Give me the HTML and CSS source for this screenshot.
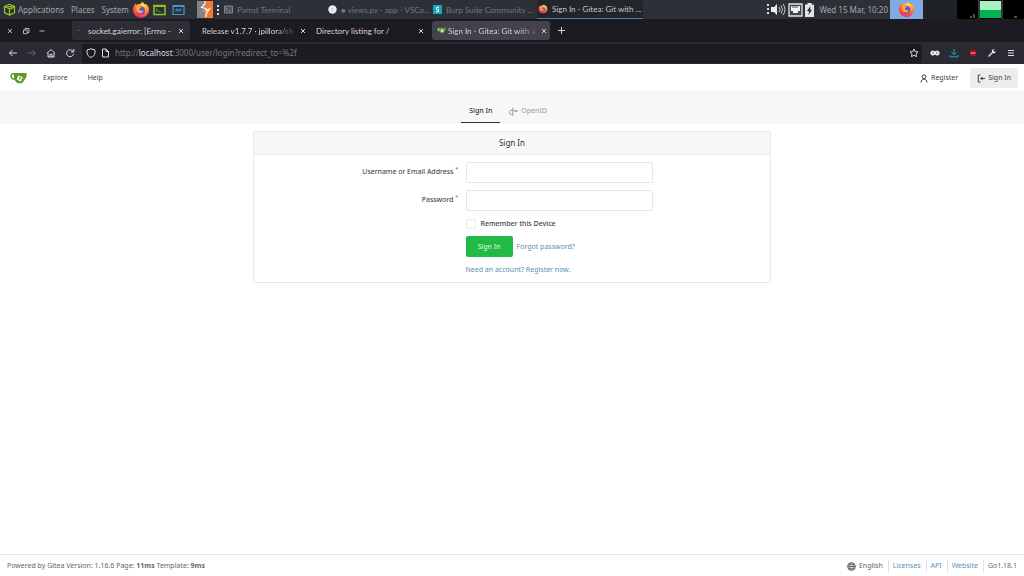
FILE: index.html
```html
<!DOCTYPE html>
<html lang="en">
<head>
<meta charset="utf-8">
<title>Sign In - Gitea: Git with a cup of tea</title>
<link rel="stylesheet" href="styles.css">
</head>
<body>
<svg class="defs" width="0" height="0" aria-hidden="true">
  <defs>
    <radialGradient id="flame" cx=".65" cy=".2" r=".95"><stop offset="0" stop-color="#ffe23e"/><stop offset=".4" stop-color="#ff9a2c"/><stop offset=".75" stop-color="#fb3c4d"/><stop offset="1" stop-color="#d9207c"/></radialGradient>
    <symbol id="firefox" viewBox="0 0 18 18"><path fill="url(#flame)" d="M2.4 4.2c.3-.9.8-1.500 1.300-2 0 .8.3 1.200.7 1.500 1-.5 2-.6 3-.4C8.700 2.800 9.600 1.600 11 .6c0 1.500 1 2 2.300 3.200 0-.6 0-.9-.2-1.500 2.600 1.700 4.100 4.200 4 7.200A8.200 8.200 0 0 1 .8 9.600C.7 7.600 1.300 5.600 2.400 4.200z"/><circle cx="9" cy="9.400" r="4" fill="#7545e0"/><path d="M4.500 6c2-1 4-.5 5 .8-1.200 0-2 .5-2.300 1.500.5 1.700 2.800 2 4.300.9-.4 2.600-2.400 3.400-4.300 2.800C5.200 11.400 4 9 4.500 6z" fill="#ffae2e"/></symbol>
    <symbol id="cup" viewBox="0 0 16 11"><path d="M4 .8h11.700c.2 2.200-.3 4.200-1.400 5.700l-2.200 3c-.5.7-1 1-1.800 1H7.500C6.500 10.500 5.300 9 4.600 7.600 2 7.500.4 5.800.3 3.600.2 1.600 1.600.6 4 .8z" fill="#609926"/><path d="M3.600 2.200c-1.400-.1-1.900.6-1.800 1.700.1 1.100.9 1.900 2.300 2.200-.3-1.200-.5-2.500-.5-3.900z" fill="#fff"/><rect x="6.800" y="3.600" width="4.600" height="4.600" rx="1" transform="rotate(25 9 6)" fill="#fff"/><path d="M9.700 3.500 8.300 7.800M9.200 5l1.300.7-.5 1.600" stroke="#609926" stroke-width=".7" fill="none"/></symbol>
    <symbol id="close" viewBox="0 0 8 8"><path d="M2 2l4 4M6 2 2 6" stroke="currentColor" fill="none"/></symbol>
  </defs>
</svg>

<header class="panel">
  <nav class="menus">
    <button class="menu"><svg width="13" height="13" viewBox="0 0 13 13" fill="none" stroke="#94d11c" stroke-width="1.200"><path d="M1.500 3.500 6.500 1.300l5 2.200v6.200L6.500 12 1.500 9.700zM1.500 3.500l5 2 5-2M6.500 5.500V12M4 2.400l5 2v2"/></svg>Applications</button>
    <button class="menu">Places</button>
    <button class="menu">System</button>
  </nav>
  <div class="launchers">
    <svg width="18" height="18"><use href="#firefox"/></svg>
    <svg width="13" height="12" viewBox="0 0 13 12"><path d="M1 1.500h11v9H1z" fill="none" stroke="#8bc321" stroke-width="1.500"/><path d="M1 2h11" stroke="#8bc321" stroke-width="2"/><path d="m3 5 1.500 1L3 7.300M5.500 7.500h2" fill="none" stroke="#8bc321" stroke-width=".8"/></svg>
    <svg width="13" height="12" viewBox="0 0 13 12"><path d="M1 1.500h11v9H1z" fill="none" stroke="#4a8fd3" stroke-width="1.200"/><path d="M1 2h11" stroke="#4a8fd3" stroke-width="2"/><path d="M4 8V5h1.500v1.500H4M7 8V5h2v1.500H7" fill="none" stroke="#4a8fd3" stroke-width=".8"/></svg>
    <svg class="burp" width="16" height="17" viewBox="0 0 16 17"><path fill="#82828a" d="M0 0h16v17H0z"/><path fill="#f47a2d" d="M8 0h8v17H7l2-5-4-2 4-4z"/><path d="M8 0v3L4.500 6.500 9 7.500v2l3.500-1.500L9 13v3" fill="none" stroke="#fff" stroke-width="1.200"/></svg>
  </div>
  <nav class="windows">
    <button class="window dim w-term"><svg width="3" height="12" viewBox="0 0 3 12" fill="#ddd"><path d="M0 1h2v2H0zM0 5h2v2H0zM0 9h2v2H0z"/></svg><svg width="9" height="9" viewBox="0 0 9 9"><path d="M.5 1h8v7h-8z" fill="#51545a" stroke="#85888d"/><path d="m2 3 1.500 1.500L2 6M4.500 6H6" stroke="#aaa" fill="none" stroke-width=".7"/></svg><span>Parrot Terminal</span></button>
    <button class="window dim w-code"><svg width="9" height="9" viewBox="0 0 9 9"><circle cx="4.500" cy="4.500" r="4.200" fill="#e7edf1"/><path d="m3 3 3 3M5.500 2.500 3 6" stroke="#b9cddc" stroke-width=".8"/></svg><span>● views.py - app - VSCo...</span></button>
    <button class="window dim w-burp"><svg width="9" height="9" viewBox="0 0 9 9"><path fill="#15a9b5" d="M0 0h9v9H0z"/><path d="M6 2.300H3.500v2h2v2.400H3" stroke="#fff" fill="none"/></svg><span>Burp Suite Community ...</span></button>
    <button class="window current"><svg width="10" height="10"><use href="#firefox"/></svg><span>Sign In - Gitea: Git with ...</span></button>
  </nav>
  <div class="tray">
    <svg width="20" height="15" viewBox="0 0 20 15"><path d="M1 2h2v2H1zM1 6h2v2H1zM1 10h2v2H1z" fill="#ddd"/><path d="M5 5h3l3-3v11L8 10H5z" fill="#eee"/><path d="M13 5q2 2.500 0 5M15 3.500q3 4 0 8M17 2q4 5.500 0 11" fill="none" stroke="#ccc"/></svg>
    <svg width="15" height="14" viewBox="0 0 15 14"><path d="M1 1h13v12H1z" fill="#43474c" stroke="#e4e4e4" stroke-width="1.300"/><path d="M3 3h9v5h-2v2H5V8H3z" fill="#f3f3f3"/><path d="M5 3v2M7 3v2M9 3v2" stroke="#444"/></svg>
    <svg width="9" height="14" viewBox="0 0 9 14"><path d="M2.500 0h4v1.500H9V14H0V1.500h2.500z" fill="#e4e4e4"/><path d="M5.500 3 2 8h2L3.500 12 7 6.800H5z" fill="#25282d"/></svg>
    <time>Wed 15 Mar, 10:20</time>
  </div>
  <div class="active-app"><svg width="17" height="17"><use href="#firefox"/></svg></div>
  <svg class="monitors" width="67" height="19" viewBox="0 0 67 19"><path fill="#000" d="M0 0h67v19H0z"/><path fill="#343940" d="M21 0h2v19h-2zM44 0h2v19h-2z"/><path fill="#a8f3c5" d="M23 1h21v9H23z"/><path fill="#00b454" d="M23 10h21v8H23z"/><path d="M17 14v4M13 17h2M57 17h3" stroke="#b8a43d"/></svg>
</header>

<section class="tabbar">
  <div class="win-controls">
    <button aria-label="Close window"><svg width="8" height="8"><use href="#close"/></svg></button>
    <button aria-label="Restore"><svg width="8" height="8" viewBox="0 0 8 8" fill="none" stroke="currentColor"><path d="M1.500 3h3.700v3.700H1.500zM3 3V1.500h4v4H5"/></svg></button>
    <button aria-label="Minimize"><svg width="8" height="8" viewBox="0 0 8 8" stroke="currentColor"><path d="M1.500 4h5"/></svg></button>
  </div>
  <div class="tab shaded"><i class="dot"></i><span>socket.gaierror: [Errno -</span><button aria-label="Close tab"><svg width="8" height="8"><use href="#close"/></svg></button></div>
  <div class="tab"><i class="gap"></i><span class="fade">Release v1.7.7 · jpillora/ch</span><button aria-label="Close tab"><svg width="8" height="8"><use href="#close"/></svg></button></div>
  <div class="tab bare"><span>Directory listing for /</span><button aria-label="Close tab"><svg width="8" height="8"><use href="#close"/></svg></button></div>
  <div class="tab selected"><svg width="9" height="7" class="favicon"><use href="#cup"/></svg><span class="fade">Sign In - Gitea: Git with a</span><button aria-label="Close tab"><svg width="8" height="8"><use href="#close"/></svg></button></div>
  <button class="new-tab" aria-label="New tab"><svg width="9" height="9" viewBox="0 0 9 9" stroke="currentColor"><path d="M4.500 1v7M1 4.500h7"/></svg></button>
</section>

<section class="toolbar">
  <div class="nav-buttons">
    <button aria-label="Back"><svg width="10" height="10" viewBox="0 0 10 10"><path d="M9 5H1.500M4.500 2l-3 3 3 3"/></svg></button>
    <button aria-label="Forward" disabled><svg width="10" height="10" viewBox="0 0 10 10"><path d="M1 5h7.500M5.500 2l3 3-3 3"/></svg></button>
    <button aria-label="Home"><svg width="10" height="10" viewBox="0 0 10 10"><path d="M1 5.200 5 1.500l4 3.700M2 5v4h6V5M4 9V6.300h2V9"/></svg></button>
    <button aria-label="Reload"><svg width="10" height="10" viewBox="0 0 10 10"><path d="M8 3.300A3.500 3.500 0 1 0 8.500 6M8.800 1v3H5.800"/></svg></button>
  </div>
  <div class="urlbar">
    <svg width="10" height="10" viewBox="0 0 10 10"><path d="M5 .8 9 2v2.500C9 7 7.300 8.600 5 9.400 2.700 8.600 1 7 1 4.500V2z"/></svg>
    <svg width="9" height="10" viewBox="0 0 9 10"><path d="M1.500 1H5l2.500 2.500V9h-6zM5 1v2.500h2.500"/></svg>
    <p class="url">http://<b>localhost</b>:3000/user/login?redirect_to=%2f</p>
    <svg width="10" height="10" viewBox="0 0 10 10"><path d="m5 1 1.200 2.600 2.800.3L7 5.800l.5 2.900L5 7.300 2.500 8.700 3 5.800 1 3.900l2.800-.3z"/></svg>
  </div>
  <div class="tools">
    <svg width="10" height="10" viewBox="0 0 10 10"><path d="M.7 5C.7 2.500 3 2.500 5 3.500c2-1 4.300-1 4.300 1.500S7 7.800 5 6.200C3 7.800.7 7.500.7 5z" fill="#fff" stroke-width=".6"/><path d="M2.300 5h1.500M6.200 5h1.500" stroke="#222"/></svg>
    <svg width="10" height="10" viewBox="0 0 10 10"><path d="M5 1v5.500M2.500 4.300 5 6.700l2.500-2.400M1 7v1.800h8V7" stroke="#12aebd"/></svg>
    <svg width="10" height="10" viewBox="0 0 10 10"><circle cx="5" cy="5" r="3.500" fill="#a10d18" stroke="none"/><path d="M3 4.500h1.500v1.200H3zM5.500 4.500H7v1.200H5.500z" stroke="#e9b2b5" stroke-width=".6"/></svg>
    <svg width="10" height="10" viewBox="0 0 10 10"><path d="m1.500 8.500 4-4" stroke-width="1.500"/><path d="M7.300 1.200C5.500.8 4.300 2.500 5 4.300 6 6 8.500 5.500 8.900 3.300L7.300 4 6.200 3z" fill="#fff" stroke="none"/></svg>
    <svg width="10" height="10" viewBox="0 0 10 10"><path d="M2 2.500h6M2 5h6M2 7.500h6"/></svg>
  </div>
</section>

<nav class="site-nav">
  <a class="brand" href="#" aria-label="Home"><svg width="17" height="12"><use href="#cup"/></svg></a>
  <a href="#">Explore</a>
  <a href="#">Help</a>
  <a class="push" href="#"><svg width="8" height="9" viewBox="0 0 8 9"><circle cx="4" cy="2.800" r="1.900"/><path d="M1 8.500c0-4.500 6-4.500 6 0"/></svg>Register</a>
  <a class="active" href="#"><svg width="8" height="9" viewBox="0 0 8 9"><path d="M3.500 1H1.300v7h2.200M8 4.500H4"/><path d="M5.500 2.500v4l-2.500-2z" fill="currentColor" stroke="none"/></svg>Sign In</a>
</nav>

<main>
  <nav class="subtabs">
    <a class="active" href="#">Sign In</a>
    <a href="#"><svg width="10" height="9" viewBox="0 0 10 9"><path d="M4.800.5v8M4.300 3.200C.2 3.200.2 7.800 4.800 7.800M5.300 3.300q1.700.1 2.700.9"/><path d="M9.200 2.500v2.600H6.300z" fill="currentColor" stroke="none"/></svg>OpenID</a>
  </nav>
  <form class="card">
    <h1>Sign In</h1>
    <div class="fields">
      <label for="user">Username or Email Address <sup>*</sup></label>
      <input id="user" type="text">
      <label for="pass">Password <sup>*</sup></label>
      <input id="pass" type="password">
      <div class="remember"><input id="remember" type="checkbox"><label for="remember">Remember this Device</label></div>
      <div class="actions"><button type="button">Sign In</button><a href="#">Forgot password?</a></div>
      <a class="signup" href="#">Need an account? Register now.</a>
    </div>
  </form>
</main>

<footer>
  <p>Powered by Gitea Version: 1.16.6 Page: <strong>11ms</strong> Template: <strong>9ms</strong></p>
  <div class="links">
    <span class="lang"><svg width="9" height="9" viewBox="0 0 9 9"><circle cx="4.500" cy="4.500" r="3.900"/><path d="M.6 4.500h7.800M4.500.6C2 3 2 6 4.500 8.400 7 6 7 3 4.500.6M1.200 2.700h6.600M1.200 6.300h6.600"/></svg>English</span>
    <a href="#">Licenses</a><a href="#">API</a><a href="#">Website</a><span>Go1.18.1</span>
  </div>
</footer>
</body>
</html>
```
FILE: styles.css
```css
* { box-sizing: border-box; }
body {
  margin: 0;
  min-height: 100vh;
  display: flex;
  flex-direction: column;
  background: #fff;
  color: #444;
  font: 7px/12px "Noto Sans", sans-serif;
}
.defs { position: absolute; }
svg { display: block; flex: none; }
p, h1 { margin: 0; }
a { color: #5790b8; text-decoration: none; }
button { font: inherit; color: inherit; background: none; border: 0; padding: 0; }

/* Desktop panel */
.panel { display: flex; align-items: center; height: 19px; background: #2c3138; color: #a5a8ac; font-size: 8px; white-space: nowrap; }
.menus { display: flex; gap: 7px; padding-left: 3px; width: 132px; }
.menu { display: flex; align-items: center; gap: 2px; }
.launchers { display: flex; align-items: center; gap: 6px; width: 85px; }
.launchers .burp { margin-left: 6px; }
.launchers svg:first-child { margin-right: -3px; }
.windows { display: flex; align-self: stretch; font-family: Lato, "Noto Sans", sans-serif; }
.window { display: flex; align-items: center; gap: 4px; }
.window.dim { color: #73777c; }
.w-term { width: 111px; }
.w-code { width: 105px; }
.w-burp { width: 104px; }
.window.current { width: 106px; padding-left: 1px; color: #c6c8cb; border-bottom: 1px solid #4c7bbb; background: #22262b; }
.tray { display: flex; align-items: center; gap: 2px; margin-left: auto; }
.tray time { margin: 0 2px 0 4px; }
.active-app { display: flex; align-items: center; justify-content: center; width: 33px; height: 19px; background: #82abe3; }
.monitors { padding-left: 34px; width: 101px; background: #1f2227; }

/* Browser */
.tabbar { display: flex; align-items: center; height: 23px; background: #1c1b22; color: #d5d4d9; font: 8px/12px Lato, "Noto Sans", sans-serif; white-space: nowrap; }
.win-controls { display: flex; gap: 8px; width: 72px; padding-left: 6px; color: #b5b4b9; }
.tab { display: flex; align-items: center; gap: 5px; width: 118px; height: 19px; padding: 0 5px; border-radius: 3px; margin-right: 2px; }
.tab span { flex: 1; }
.tab.shaded { background: #2e2d35; }
.tab.bare { padding-left: 4px; }
.tab.selected { background: #42414d; }
.tab .fade { mask-image: linear-gradient(90deg, #000 80%, #0003); }
.dot { width: 1px; height: 1px; margin: 0 4px 0 1px; background: #888; }
.gap { width: 6px; }
.favicon { margin-right: -3px; }
.new-tab { margin-left: 5px; }
.toolbar { display: flex; align-items: center; height: 22px; background: #2b2a33; color: #dddce1; font-size: 8px; }
.toolbar svg { fill: none; stroke: currentColor; }
.toolbar button:disabled { color: #66656e; }
.nav-buttons { display: flex; gap: 9px; width: 82px; padding-left: 8px; }
.urlbar { flex: 1; display: flex; align-items: center; gap: 5px; height: 19px; padding: 0 3px 0 4px; border-radius: 2px; background: #1c1b22; }
.url { flex: 1; color: #77767e; }
.url b { font-weight: 400; color: #dddce1; }
.tools { display: flex; gap: 9px; padding: 0 8px; }

/* Site header */
.site-nav { display: flex; align-items: center; gap: 20px; padding: 4px 6px 3px 10px; line-height: 20px; }
.site-nav a { display: flex; align-items: center; gap: 3px; color: #444; }
.site-nav svg, .subtabs svg, .lang svg { fill: none; stroke: currentColor; }
.site-nav .brand { margin-right: -4px; }
.site-nav .brand svg { stroke: none; }
.site-nav .push { margin-left: auto; margin-right: -8px; }
.site-nav .active { padding: 0 7px; border-radius: 2px; background: #ededed; }

/* Sign-in form */
main { flex: 1; }
.subtabs { display: flex; justify-content: center; height: 33px; background: #f7f7f7; padding: 9px 8px 1px 0; }
.subtabs a { display: flex; align-items: center; gap: 3px; padding: 0 8px; color: #999; border-bottom: 1px solid transparent; }
.subtabs .active { color: #333; border-color: #333; font-weight: 500; }
.card { width: 50.6%; margin: 7px auto 0; border: 1px solid #e8e8e8; border-radius: 2px; }
.card h1 { background: #f7f7f7; border-bottom: 1px solid #e8e8e8; font-size: 8px; font-weight: 400; line-height: 22px; text-align: center; color: #333; }
.fields { display: grid; grid-template-columns: 41% 36.4%; align-items: center; row-gap: 7px; padding: 7px 0; line-height: 11px; }
.fields > label { padding: 0 7px 2px 0; text-align: right; color: #333; }
sup { color: #db4444; line-height: 0; font-size: 6px; }
.fields > input { width: 100%; height: 21px; border: 1px solid #e6e6e6; border-radius: 2px; padding: 0 6px; font: inherit; background: #fff; }
.remember, .actions, .signup { grid-column: 2; }
.remember { display: flex; align-items: center; gap: 5px; font-weight: 500; }
.remember input { appearance: none; width: 10px; height: 10px; margin: 0; border: 1px solid #ececec; border-radius: 1px; }
.actions { display: flex; align-items: center; gap: 4px; }
.actions button { width: 47px; height: 21px; border-radius: 2px; background: #21ba45; color: #e2f8e7; }

footer { display: flex; justify-content: space-between; padding: 5px 7px 4px; border-top: 1px solid #e6e6e6; color: #666; }
.links { display: flex; }
.links > * { padding-left: 4px; margin-left: 5px; border-left: 1px solid #e2e2e2; }
.links .lang { display: flex; align-items: center; gap: 3px; border: 0; }
```
